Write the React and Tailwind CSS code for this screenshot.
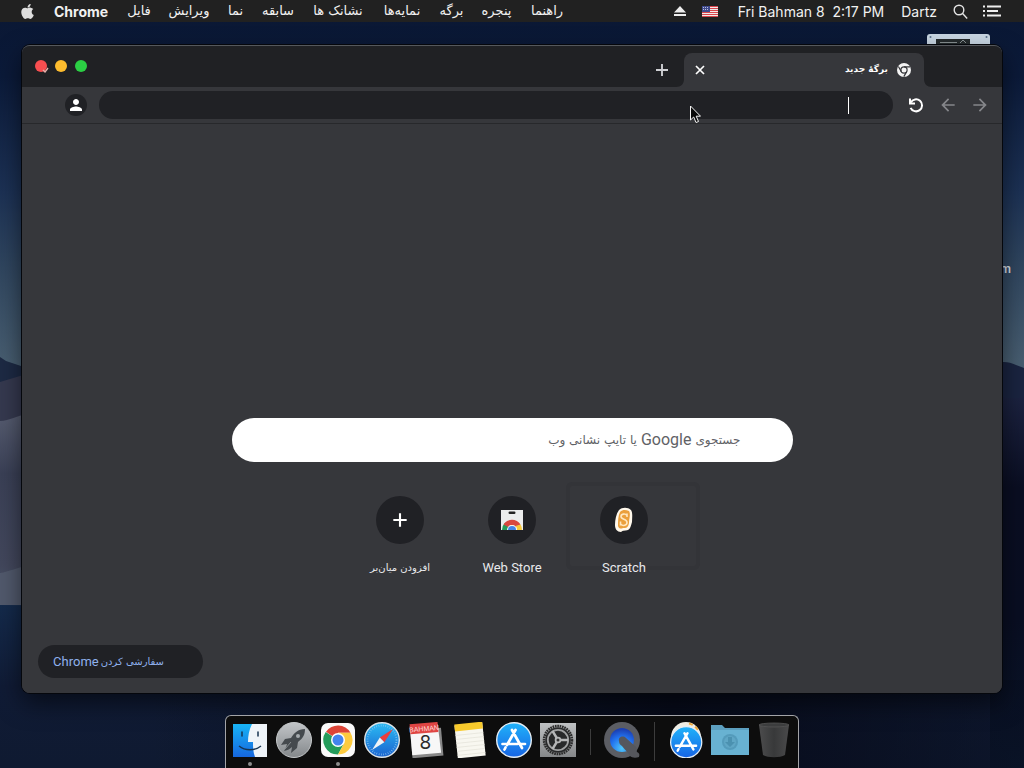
import React from "react";
import { FaApple } from "react-icons/fa";
import { MdPerson, MdArrowBack, MdArrowForward } from "react-icons/md";

const menus = [
  ["فایل", "w-[24px]"],
  ["ویرایش", "w-[40px]"],
  ["نما", "w-[17px]"],
  ["سابقه", "w-[32px]"],
  ["نشانک ها", "w-[52px]"],
  ["نمایه‌ها", "w-[40px]"],
  ["برگه", "w-[23px]"],
  ["پنجره", "w-[31px]"],
  ["راهنما", "w-[34px]"],
];

function Wallpaper() {
  return (
    <svg className="absolute inset-0 h-full w-full" viewBox="0 0 1024 768" preserveAspectRatio="none" aria-hidden="true">
      <defs>
        <linearGradient id="sky" x1="0" y1="0" x2="0" y2="1">
          <stop offset="0" stopColor="#0a1733" />
          <stop offset=".1" stopColor="#0b1a39" />
          <stop offset=".25" stopColor="#1c3154" />
          <stop offset=".35" stopColor="#30465f" />
          <stop offset=".47" stopColor="#475d70" />
          <stop offset="1" stopColor="#475d70" />
        </linearGradient>
        <linearGradient id="dune" x1="0" y1="0" x2="0" y2="1">
          <stop offset="0" stopColor="#565c70" />
          <stop offset=".3" stopColor="#3a4056" />
          <stop offset=".75" stopColor="#42475c" />
          <stop offset="1" stopColor="#4d586c" />
        </linearGradient>
        <linearGradient id="ground" x1="0" y1="0" x2="0" y2="1">
          <stop offset="0" stopColor="#142a4b" />
          <stop offset=".5" stopColor="#101b35" />
          <stop offset="1" stopColor="#0f1a31" />
        </linearGradient>
        <linearGradient id="shade" x1="0" y1="0" x2="0" y2="1">
          <stop offset="0" stopColor="#1c2341" />
          <stop offset=".25" stopColor="#0a0e22" />
          <stop offset=".6" stopColor="#090e22" />
          <stop offset="1" stopColor="#0a162b" />
        </linearGradient>
        <linearGradient id="east" x1="0" y1="0" x2="1" y2="0">
          <stop offset="0" stopColor="#070b1a" stopOpacity="0" />
          <stop offset=".6" stopColor="#070b1a" />
          <stop offset="1" stopColor="#070b1a" stopOpacity=".3" />
        </linearGradient>
      </defs>
      <rect width="1024" height="768" fill="url(#sky)" />
      <path d="M0 357l6 4 18 6v40H0z" fill="#1d2a44" />
      <path d="M0 382l30-9v60H0z" fill="#35394f" />
      <path d="M0 421c10 0 16-6 30-7v200H0z" fill="url(#dune)" />
      <path d="M0 573c8-1 18-6 30-8v50H0z" fill="#51596c" />
      <path d="M0 605l1024 4v159H0z" fill="url(#ground)" />
      <path d="M990 366c12-6 18-4 26-1l8 3v60h-34z" fill="#1a2440" />
      <path d="M990 394c14 3 22 6 34 3v371h-34z" fill="url(#shade)" />
      <rect x="150" y="680" width="874" height="88" fill="url(#east)" />
    </svg>
  );
}

function Flag() {
  return (
    <svg width="16" height="11" viewBox="0 0 16 11" role="img" aria-label="U.S.">
      <rect width="16" height="11" fill="#f2e9ea" />
      <path d="M0 .5h16M0 2.5h16M0 4.5h16M0 6.5h16M0 8.5h16M0 10.5h16" stroke="#d9454c" />
      <rect width="8" height="6" fill="#3f4a8c" />
      <path d="M1 1.5h6M1 3.5h6" stroke="#b8bddd" strokeDasharray="1 1" />
    </svg>
  );
}

function MenuBar() {
  return (
    <header className="relative flex h-[22px] items-center justify-between bg-[#212121] pr-[23px] pl-[19px] text-[14px] whitespace-nowrap text-[#f1f1f1]">
      <nav className="flex items-center gap-[18px]">
        <button aria-label="Apple" className="w-[17px]"><FaApple size={17} color="#dedede" /></button>
        <button className="w-[55px] text-left font-bold">Chrome</button>
        {menus.map(([name, width]) => (
          <button key={name} className={`${width} flex justify-center font-['DejaVu_Sans',sans-serif] text-[13px] leading-5`}>{name}</button>
        ))}
      </nav>
      <div className="flex items-center">
        <button aria-label="Eject" className="mr-4">
          <svg width="12" height="12" viewBox="0 0 12 12" fill="#ededed"><path d="M6 1l6 6.5H0zM0 9h12v2H0z" /></svg>
        </button>
        <button aria-label="Input source" className="mr-[20px]"><Flag /></button>
        <button className="mr-[17px] whitespace-pre">Fri Bahman 8  2:17 PM</button>
        <button className="mr-4">Dartz</button>
        <button aria-label="Search" className="mr-[15px]">
          <svg width="15" height="15" viewBox="0 0 15 15" fill="none" stroke="#e4e4e4" strokeWidth="1.4"><circle cx="6" cy="6" r="4.8" /><path d="M9.6 9.6l4.6 4.8" /></svg>
        </button>
        <button aria-label="Notification center">
          <svg width="18" height="12" viewBox="0 0 18 12" stroke="#ededed" strokeWidth="1.8"><path d="M0 1.5h2M4 1.5h14M0 6h2M4 6h11M0 10.5h2M4 10.5h14" /></svg>
        </button>
      </div>
    </header>
  );
}

function Plus({ size }) {
  return (
    <svg width={size} height={size} viewBox="0 0 18 18" stroke="currentColor" strokeWidth="1.900"><path d="M9 3v12M3 9h12" /></svg>
  );
}

function ChromeMono() {
  return (
    <svg width="14" height="14" viewBox="0 0 14 14" fill="none" aria-hidden="true">
      <circle cx="7" cy="7" r="7" fill="#f4f4f4" />
      <circle cx="7" cy="7" r="3.1" stroke="#36373b" strokeWidth="1.2" />
      <path d="M7 3.9h6M4.3 8.6L1.4 3.5M9.7 8.6l-2.9 5" stroke="#36373b" strokeWidth="1.2" />
    </svg>
  );
}

function TabStrip() {
  return (
    <div className="flex h-[41px] items-end bg-[#202124] pr-[78px]">
      <div className="flex flex-1 gap-2 self-start pt-[14px] pl-[13px]">
        <button aria-label="Close window" className="relative size-3 rounded-full bg-[#f84e50]">
          <svg className="absolute top-[7px] left-[7px]" width="7" height="6" viewBox="0 0 7 6"><path d="M1 3l2 2 3-4" fill="none" stroke="#e6b0aa" strokeWidth="1.4" /></svg>
        </button>
        <button aria-label="Minimize window" className="size-3 rounded-full bg-[#fdbc2e]" />
        <button aria-label="Zoom window" className="size-3 rounded-full bg-[#2bcf44]" />
      </div>
      <button aria-label="New tab" className="mr-[13px] mb-2 text-[#cfd0d3]"><Plus size={18} /></button>
      <div dir="rtl" className="relative flex h-[34px] w-[240px] items-center justify-between rounded-t-lg bg-[#36373b] pr-[13px] pl-[9px] text-white">
        <svg className="absolute bottom-0 -left-2" width="8" height="8"><path d="M8 0v8H0c5 0 8-3 8-8" fill="#36373b" /></svg>
        <svg className="absolute -right-2 bottom-0" width="8" height="8"><path d="M0 0v8h8c-5 0-8-3-8-8" fill="#36373b" /></svg>
        <div className="flex items-center gap-[9px]">
          <ChromeMono />
          <span className="font-['DejaVu_Sans',sans-serif] text-[9px] font-bold">برگهٔ جدید</span>
        </div>
        <button aria-label="Close tab">
          <svg width="14" height="14" viewBox="0 0 14 14" stroke="#fff" strokeWidth="1.700"><path d="M3 3l8 8M11 3l-8 8" /></svg>
        </button>
      </div>
    </div>
  );
}

function Toolbar() {
  return (
    <div className="flex h-[37px] items-center border-b border-[#27282b] bg-[#36373b] pr-3 pl-[43px]">
      <button aria-label="Profile" className="mr-3 flex size-[22px] items-center justify-center rounded-full bg-[#202125] text-white"><MdPerson size={18} /></button>
      <div dir="rtl" className="flex h-7 flex-1 items-center rounded-full bg-[#202125] pr-11 pl-4">
        <span className="h-[17px] w-px bg-white" />
        <input aria-label="نشانی" className="min-w-0 flex-1 bg-transparent text-[14px] text-white outline-none" />
      </div>
      <div className="ml-[13px] flex items-center gap-3 text-[#85868a]">
        <button aria-label="Reload">
          <svg width="20" height="20" viewBox="0 0 20 20" fill="none" stroke="#fff" strokeWidth="2">
            <path d="M4.800 7.500A6 6 0 1 1 4.600 12.800" />
            <path d="M4 3.500v5h5" />
          </svg>
        </button>
        <button aria-label="Back"><MdArrowBack size={20} /></button>
        <button aria-label="Forward"><MdArrowForward size={20} /></button>
      </div>
    </div>
  );
}

function ScratchIcon() {
  return (
    <svg width="18" height="26" viewBox="0 0 18 26" aria-hidden="true">
      <path d="M4 3C7 0 13 0 16 3c2 3 1 8 1 12-1 4-2 7-4 8-3 1-5 0-7 2-4 0-6-3-6-7 0-5 1-11 4-15z" fill="#fff8ec" />
      <path d="M5 5c3-3 6-2 9-1 2 3 0 8 0 12-1 5-3 5-6 5-2 1-4 1-5-2 0-5 0-10 2-14z" fill="#eba03c" />
      <path d="M12 6.5v3.500M12 8.500C10 6 6 7 6 9.500c0 3.500 6 2 6 6 0 3-4 4-6.500 1.500M5.500 14.500v4" fill="none" stroke="#ffe7c0" strokeWidth="1.6" />
    </svg>
  );
}

function WebStoreIcon() {
  return (
    <svg width="24" height="22" viewBox="0 0 24 22" aria-hidden="true">
      <path d="M1 1h22v20H1z" fill="#eceded" />
      <rect x="8.500" y="2.500" width="7" height="2.500" rx="1.200" fill="#222" />
      <path d="M2 21a10 10 0 0 1 3-7.200L9.500 18 8 21z" fill="#269a58" />
      <path d="M3.500 15.500a10 10 0 0 1 17 0L16 18a5 5 0 0 0-8 0z" fill="#d9473f" />
      <path d="M20.500 15.500A10 10 0 0 1 22 21h-5a5 5 0 0 0-1.500-4z" fill="#f7c93c" />
      <path d="M7 21a5 5 0 0 1 10 0z" fill="#f4f4f4" />
      <path d="M8 21a4 4 0 0 1 8 0z" fill="#4583e6" />
    </svg>
  );
}

function Shortcut({ label, children, persian }) {
  return (
    <a href="#" className="relative flex w-28 flex-col items-center text-[#e8e9eb]">
      <span className="flex size-12 items-center justify-center rounded-full bg-[#202125]">{children}</span>
      <span className={persian ? "mt-[14px] font-['DejaVu_Sans',sans-serif] text-[10px] leading-5" : "mt-[14px] font-['Roboto',sans-serif] text-[13px] leading-5"}>{label}</span>
    </a>
  );
}

function NewTabPage() {
  return (
    <div className="flex flex-1 flex-col items-center bg-[#36373b]">
      <div className="flex flex-1 flex-col items-center justify-end">
        <div dir="rtl" className="relative mt-8 w-[561px] max-w-full">
          <input id="web-search" className="h-11 w-full rounded-full bg-white px-[52px] font-['Roboto','DejaVu_Sans',sans-serif] text-[16px] outline-none" />
          <label htmlFor="web-search" className="absolute inset-y-0 right-[52px] flex items-center gap-1 font-['DejaVu_Sans',sans-serif] text-[12px] whitespace-nowrap text-[#5f6266]">
            <span>جستجوی</span>
            <span className="font-['Roboto',sans-serif] text-[16px]">Google</span>
            <span>یا تایپ نشانی وب</span>
          </label>
        </div>
        <div className="relative mt-[34px] flex">
          <span className="absolute -top-[14px] -right-[20px] h-[88px] w-[134px] rounded-md border-4 border-[#333438]" />
          <Shortcut label="افزودن میان‌بر" persian><span className="text-white"><Plus size={20} /></span></Shortcut>
          <Shortcut label="Web Store"><WebStoreIcon /></Shortcut>
          <Shortcut label="Scratch"><ScratchIcon /></Shortcut>
        </div>
      </div>
      <button dir="rtl" className="mt-[67px] mb-[15px] ml-4 flex h-[33px] w-[165px] items-center gap-[2px] self-start rounded-full bg-[#202125] pr-[39px] whitespace-nowrap text-[#8fb1ee]">
        <span className="font-['DejaVu_Sans',sans-serif] text-[10px]">سفارشی کردن</span>
        <span className="font-['Roboto',sans-serif] text-[13px]">Chrome</span>
      </button>
    </div>
  );
}

function Finder() {
  return (
    <svg viewBox="0 0 36 36">
      <defs><linearGradient id="fb" x1="0" y1="0" x2="0" y2="1"><stop stopColor="#18b4f6" /><stop offset="1" stopColor="#1667de" /></linearGradient></defs>
      <path d="M1 2h34v33H1z" fill="#eef4f9" />
      <path d="M1 2h19c-3 6-4 12-4 18h5c0 5 0 10 2 15H1z" fill="url(#fb)" />
      <path d="M10 10v4M26 10v4" stroke="#173451" strokeWidth="1.5" strokeLinecap="round" />
      <path d="M7 24c6 5 16 5 22 0" fill="none" stroke="#173451" strokeWidth="1.300" />
    </svg>
  );
}

function Launchpad() {
  return (
    <svg viewBox="0 0 36 36">
      <defs><linearGradient id="lp" x1="0" y1="0" x2="0" y2="1"><stop stopColor="#c2c5c8" /><stop offset="1" stopColor="#84888b" /></linearGradient></defs>
      <circle cx="18" cy="18" r="17.500" fill="url(#lp)" stroke="#c5c8ca" />
      <path d="M29 7c-7 0-11 4-14 9l-6 1-4 6 6-1c-1 3-1 4-3 7 4-1 6-2 8-4l-1 6 6-5 1-6c5-4 7-7 7-13z" fill="#454a4e" />
      <circle cx="22" cy="14" r="2" fill="#a6abae" />
      <path d="M9 27l6-7" stroke="#888d90" />
    </svg>
  );
}

function ChromeIcon() {
  return (
    <svg viewBox="0 0 36 36">
      <rect x="1" y="1" width="34" height="34" rx="7" fill="#fafafa" />
      <path d="M18 18L6 9.800A14.500 14.500 0 0 1 30.500 10.700H18z" fill="#dc4437" />
      <path d="M18 18L5.700 10A14.500 14.500 0 0 0 18 32.500l6-11.100z" fill="#249c5b" />
      <path d="M18 10.700h12.500A14.500 14.500 0 0 1 18 32.500l6-11.100z" fill="#fdcb3f" />
      <circle cx="18" cy="18" r="7" fill="#fff" />
      <circle cx="18" cy="18" r="5.500" fill="#4384ef" />
    </svg>
  );
}

function Safari() {
  return (
    <svg viewBox="0 0 36 36">
      <defs><linearGradient id="sf" x1="0" y1="0" x2="0" y2="1"><stop stopColor="#2bbcf4" /><stop offset="1" stopColor="#1a62cf" /></linearGradient></defs>
      <circle cx="18" cy="18" r="17.300" fill="url(#sf)" stroke="#dbe3e8" strokeWidth="1.400" />
      <circle cx="18" cy="18" r="14.500" fill="none" stroke="#8cc8f1" strokeWidth="1.800" strokeDasharray=".6 1.700" />
      <path d="M29 7L15.800 15.600l4.500 4.600z" fill="#ec3d3c" />
      <path d="M8 28l7.800-12.400 4.500 4.600z" fill="#eef2f6" />
    </svg>
  );
}

function Calendar() {
  return (
    <svg viewBox="0 0 36 36">
      <g transform="rotate(-5 18 18)">
        <path d="M3 7h31v28H3z" fill="#888" />
        <path d="M3 3h28l1 29H3z" fill="#f7f7f7" />
        <path d="M3 1h28v10H3z" fill="#df4543" />
        <text x="17" y="9" textAnchor="middle" fontSize="7" fill="#ffdcda" fontFamily="Liberation Sans, sans-serif">BAHMAN</text>
      </g>
      <text x="17.500" y="26.500" textAnchor="middle" fontSize="19" fill="#2c2c2c" fontFamily="Inter, sans-serif">8</text>
    </svg>
  );
}

function Notes() {
  return (
    <svg viewBox="0 0 36 36">
      <g transform="rotate(-6 18 18)">
        <path d="M4 2h28v33H4z" fill="#f8f7f0" />
        <path d="M4 1h28v7H4z" fill="#f8ca2c" />
        <path d="M4 12h28M4 16h28M4 20h28M4 24h28M4 28h28M4 32h28" stroke="#e4e2d8" strokeWidth=".7" />
      </g>
    </svg>
  );
}

function AppStore({ badge }) {
  return (
    <svg viewBox="0 0 36 36">
      <defs><linearGradient id="as" x1="0" y1="0" x2="0" y2="1"><stop stopColor="#20b3fa" /><stop offset="1" stopColor="#1764e4" /></linearGradient></defs>
      {badge && <><circle cx="18" cy="15" r="15" fill="#efede4" /><path d="M21 1.500a14 14 0 0 1 9 7" fill="none" stroke="#eca83d" strokeWidth="2" strokeDasharray="4 3" /></>}
      <g transform={badge ? "translate(2 4) scale(.9)" : undefined}>
        <circle cx="18" cy="18" r="17.300" fill="url(#as)" stroke="#e5edf4" strokeWidth="1.400" />
        <path d="M19.500 8L11 23M16 8l10 18M6.500 22h15M25 22h4M9.500 25.500L8.500 27.500" fill="none" stroke="#fff" strokeWidth="2.700" strokeLinecap="round" />
      </g>
    </svg>
  );
}

function Settings() {
  return (
    <svg viewBox="0 0 36 36">
      <defs><linearGradient id="st" x1="0" y1="0" x2="0" y2="1"><stop stopColor="#bfc1c3" /><stop offset="1" stopColor="#858789" /></linearGradient></defs>
      <path d="M0 1h36v34H0z" fill="url(#st)" />
      <circle cx="18" cy="18" r="14" fill="none" stroke="#2c2c2c" strokeWidth="2.500" strokeDasharray="1.700 .7" />
      <circle cx="18" cy="18" r="12.800" fill="#28292a" />
      <circle cx="18" cy="18" r="10.200" fill="none" stroke="#a0a1a2" strokeWidth="1.800" />
      <path d="M18 18h10M18 18l-5.500-9M18 18l-5.500 9" stroke="#b5b6b7" strokeWidth="2.400" />
      <circle cx="18" cy="18" r="3.300" fill="#b5b6b7" /><circle cx="18" cy="18" r="1.500" fill="#333" />
    </svg>
  );
}

function QuickTime() {
  return (
    <svg viewBox="0 0 36 36">
      <defs><radialGradient id="qt" cx=".5" cy=".85" r=".8"><stop stopColor="#4fc7fa" /><stop offset=".6" stopColor="#2171ee" /><stop offset="1" stopColor="#1c3fb2" /></radialGradient></defs>
      <circle cx="18" cy="18" r="18" fill="#5b5d63" />
      <circle cx="18" cy="18" r="12" fill="url(#qt)" />
      <path d="M15 19c-1-4 4-6 7-3l9 8c3 2 1 4 2 6 2 1 3 2 2 5-3 1-7 1-9-1-2-4-5-6-8-10-2-1-3-3-3-5z" fill="#55575d" />
    </svg>
  );
}

function Downloads() {
  return (
    <svg viewBox="0 0 40 36">
      <path d="M1 3h11l3 3h24v27H1z" fill="#5c9fbf" />
      <path d="M1 8h38v25H1z" fill="#68b2d2" />
      <circle cx="20" cy="20" r="8" fill="#549bbb" /><circle cx="20" cy="20" r="6" fill="#5fa6c5" />
      <path d="M18 15h4v5h3l-5 5-5-5h3z" fill="#4b91b0" />
    </svg>
  );
}

function Trash() {
  return (
    <svg viewBox="0 0 36 36">
      <defs><linearGradient id="tr" x1="0" x2="1"><stop stopColor="#4c4c4d" /><stop offset=".5" stopColor="#38393a" /><stop offset="1" stopColor="#4a4a4b" /></linearGradient></defs>
      <path d="M3 3h30l-4 30c-5 3-17 3-22 0z" fill="url(#tr)" />
      <ellipse cx="18" cy="3" rx="15" ry="2" fill="#3c3d3e" stroke="#555556" strokeWidth=".8" />
    </svg>
  );
}

function DockItem({ name, running, wide, children }) {
  return (
    <button aria-label={name} className="flex w-11 flex-col items-center pt-[6px]">
      <span className={wide ? "flex h-9 w-10" : "flex size-9"}>{children}</span>
      {running && <span className="mt-1 size-[4px] rounded-full bg-[#8d8d8d]" />}
    </button>
  );
}

function Dock() {
  return (
    <footer className="relative mt-[22px] flex h-[53px] rounded-t-md border border-b-0 border-[#a3a4a8] bg-[#0d0d0d] px-[2px]">
      <DockItem name="Finder" running><Finder /></DockItem>
      <DockItem name="Launchpad"><Launchpad /></DockItem>
      <DockItem name="Chrome" running><ChromeIcon /></DockItem>
      <DockItem name="Safari"><Safari /></DockItem>
      <DockItem name="Calendar"><Calendar /></DockItem>
      <DockItem name="Notes"><Notes /></DockItem>
      <DockItem name="App Store"><AppStore /></DockItem>
      <DockItem name="System Preferences"><Settings /></DockItem>
      <div className="flex w-5 justify-center pt-[13px]"><span className="h-[26px] w-px bg-[#3c3c3c]" /></div>
      <DockItem name="QuickTime"><QuickTime /></DockItem>
      <div className="flex w-5 justify-center pt-[6px]"><span className="h-[39px] w-px bg-[#3c3c3c]" /></div>
      <DockItem name="Applications"><AppStore badge /></DockItem>
      <DockItem name="Downloads" wide><Downloads /></DockItem>
      <DockItem name="Trash"><Trash /></DockItem>
    </footer>
  );
}

export default function App() {
  return (
    <div className="relative flex min-h-screen flex-col overflow-hidden bg-[#0b1733] font-['Inter',sans-serif]">
      <Wallpaper />
      <MenuBar />
      <main className="relative flex flex-1 flex-col items-center px-[22px] pt-[23px]">
        <svg className="absolute top-3 right-[34px]" width="63" height="40" viewBox="0 0 63 40" aria-hidden="true">
          <rect width="63" height="40" rx="3" fill="#c9d7e4" />
          <path d="M9 5h34v20H9z" fill="#252b2d" />
          <path d="M13 8.500h17M33 9l3-3 3 3" fill="none" stroke="#899294" />
          <circle cx="3.500" cy="3" r="1" fill="#59708a" /><circle cx="59.500" cy="3" r="1" fill="#59708a" />
        </svg>
        <span className="absolute top-[239px] right-[13px] text-[12px] leading-4 font-semibold text-[#d6dbe3]">m</span>
        <section className="relative flex w-full flex-1 flex-col rounded-lg shadow-[0_0_0_1px_#05070c,0_10px_24px_rgba(0,0,0,0.55)]">
          <div className="flex flex-1 flex-col overflow-hidden rounded-lg border-t border-[#55585c] bg-[#36373b]">
            <TabStrip />
            <Toolbar />
            <NewTabPage />
          </div>
          <svg className="absolute top-[60px] left-[68%]" width="13" height="19" viewBox="0 0 13 19" aria-hidden="true">
            <path d="M2.500 1v14l3.200-3 2.300 5.500 2.500-1-2.300-5.300h4.300z" fill="#080808" stroke="#f5f5f5" />
          </svg>
        </section>
        <Dock />
      </main>
    </div>
  );
}
